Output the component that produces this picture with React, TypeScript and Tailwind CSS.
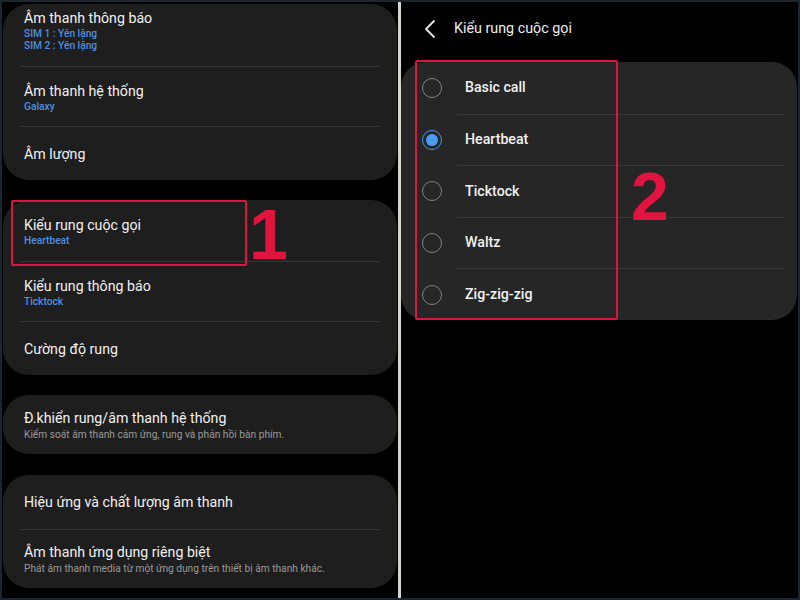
const font = { fontFamily: "Roboto, 'Noto Sans', sans-serif" };

type Row = { title: string; sub?: string[]; subColor?: "blue" | "gray"; h: string; pt?: string };

function Card({ rows, className }: { rows: Row[]; className: string }) {
  return (
    <div className={`mx-[1px] rounded-[26px] bg-[#1e1e1e] ${className}`}>
      {rows.map((row, i) => (
        <div key={row.title}>
          {i > 0 && <div className="mx-[17px] h-px bg-[#363636]" />}
          <div className={`flex flex-col justify-center px-[21px] ${row.h} ${row.pt ?? ""}`}>
            <p className="text-[14.2px] leading-[20px] text-[#f1f1f1]">{row.title}</p>
            {row.sub?.map((s) => (
              <p
                key={s}
                className={
                  row.subColor === "gray"
                    ? "text-[10.2px] leading-[14px] text-[#9a9a9a]"
                    : "text-[10.2px] leading-[12px] font-medium text-[#4f8fe3]"
                }
              >
                {s}
              </p>
            ))}
          </div>
        </div>
      ))}
    </div>
  );
}

const options = ["Basic call", "Heartbeat", "Ticktock", "Waltz", "Zig-zig-zig"];

export default function App() {
  return (
    <div
      className="relative flex h-[600px] w-[800px] border-2 border-[#1b2630] bg-black"
      style={font}
    >
      {/* Left: sound settings list */}
      <div className="flex w-[396px] flex-col pt-[2px]">
        <Card
          className="h-[176px]"
          rows={[
            { title: "Âm thanh thông báo", sub: ["SIM 1 : Yên lặng", "SIM 2 : Yên lặng"], h: "h-[62px]", pt: "justify-start! pt-[4px]" },
            { title: "Âm thanh hệ thống", sub: ["Galaxy"], h: "h-[59px]" },
            { title: "Âm lượng", h: "h-[54px]" },
          ]}
        />
        <Card
          className="mt-[20px] h-[175px]"
          rows={[
            { title: "Kiểu rung cuộc gọi", sub: ["Heartbeat"], h: "h-[61px]" },
            { title: "Kiểu rung thông báo", sub: ["Ticktock"], h: "h-[59px]" },
            { title: "Cường độ rung", h: "h-[54px]" },
          ]}
        />
        <Card
          className="mt-[20px] h-[59px]"
          rows={[
            {
              title: "Đ.khiển rung/âm thanh hệ thống",
              sub: ["Kiểm soát âm thanh cảm ứng, rung và phản hồi bàn phím."],
              subColor: "gray",
              h: "h-[59px]",
            },
          ]}
        />
        <Card
          className="mt-[21px] h-[113px]"
          rows={[
            { title: "Hiệu ứng và chất lượng âm thanh", h: "h-[54px]" },
            {
              title: "Âm thanh ứng dụng riêng biệt",
              sub: ["Phát âm thanh media từ một ứng dụng trên thiết bị âm thanh khác."],
              subColor: "gray",
              h: "h-[58px]",
            },
          ]}
        />
      </div>

      {/* Divider between screenshots */}
      <div className="w-[3px] bg-[#d7d3cf]" />

      {/* Right: vibration pattern picker */}
      <div className="flex flex-1 flex-col">
        <div className="flex h-[60px] items-center pb-[6px]">
          <svg className="ml-[22px] h-[20px] w-[14px]" viewBox="0 0 14 20" fill="none">
            <path d="M11 2 L3 10 L11 18" stroke="#e8e8e8" strokeWidth="1.8" strokeLinecap="round" strokeLinejoin="round" />
          </svg>
          <span className="ml-[17px] text-[14.3px] text-[#eeeeee]">Kiểu rung cuộc gọi</span>
        </div>
        <div className="mr-[1px] flex h-[258px] flex-col rounded-[25px] bg-[#262626]">
          {options.map((opt, i) => (
            <div key={opt} className="flex flex-1 flex-col">
              {i > 0 && <div className="ml-[56px] mr-[12px] h-px bg-[#3a3a3a]" />}
              <div className="flex flex-1 items-center">
                {opt === "Heartbeat" ? (
                  <span className="ml-[21px] flex h-[20px] w-[20px] items-center justify-center rounded-full border-[1.5px] border-[#4a96ee]">
                    <span className="h-[12px] w-[12px] rounded-full bg-[#4a9cf2]" />
                  </span>
                ) : (
                  <span className="ml-[21px] h-[20px] w-[20px] rounded-full border-[1.5px] border-[#828282]" />
                )}
                <span className="ml-[23px] text-[14.2px] font-medium text-[#f1f1f1]">{opt}</span>
              </div>
            </div>
          ))}
        </div>
      </div>

      {/* Red annotations */}
      <div className="pointer-events-none absolute left-[9px] top-[198px] h-[66px] w-[236px] rounded-[2px] border-2 border-[#dc1440]" />
      <span
        className="absolute left-[247px] top-[198px] text-[70px] font-bold leading-none text-[#e0143f]"
        style={{ fontFamily: "'Liberation Sans', Arial, sans-serif" }}
      >
        1
      </span>
      <div className="pointer-events-none absolute left-[413px] top-[58px] h-[260px] w-[203px] rounded-[2px] border-2 border-[#dc1440]" />
      <span
        className="absolute left-[629px] top-[160px] text-[68px] font-bold leading-none text-[#e0143f]"
        style={{ fontFamily: "'Liberation Sans', Arial, sans-serif" }}
      >
        2
      </span>
    </div>
  );
}
